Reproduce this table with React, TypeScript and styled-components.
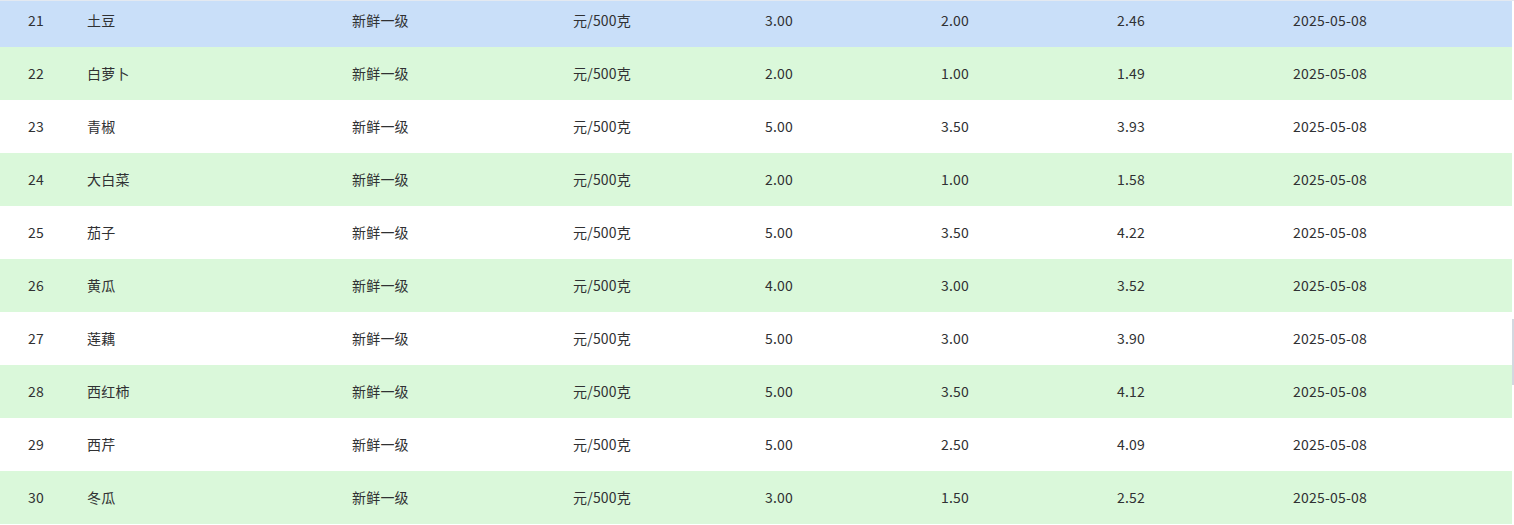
import React from 'react'
import styled, { createGlobalStyle } from 'styled-components'

const GlobalStyle = createGlobalStyle`
  html, body {
    margin: 0;
    padding: 0;
    background: #ffffff;
    overflow: hidden;
  }
  body {
    font-family: "Noto Sans CJK SC", "Noto Sans", sans-serif;
  }
`

const TableRoot = styled.div`
  position: relative;
  width: 1514px;
  height: 525px;
  overflow: hidden;
  border-top: 1px solid #e3e9f1;
  box-sizing: border-box;
`

const Body = styled.div`
  width: 1512px;
  display: flex;
  flex-direction: column;
`

const Row = styled.div<{ tone: 'current' | 'stripe' | 'plain'; clipped?: boolean }>`
  display: grid;
  grid-template-columns: 87px 265px 221px 192px 176px 176px 176px 1fr;
  align-items: center;
  height: ${(p) => (p.clipped ? '46px' : '53px')};
  padding-bottom: ${(p) => (p.clipped ? '8px' : '2px')};
  box-sizing: border-box;
  background: ${(p) =>
    p.tone === 'current' ? '#c9dff9' : p.tone === 'stripe' ? '#daf8da' : '#ffffff'};
`

const Cell = styled.div<{ first?: boolean }>`
  padding-left: ${(p) => (p.first ? '28px' : '0')};
  font-size: 14px;
  line-height: 20px;
  color: #303133;
  white-space: nowrap;
  letter-spacing: 0.2px;
`

// thin scrollbar thumb on the right edge
const ScrollThumb = styled.div`
  position: absolute;
  right: 0;
  top: 318px;
  width: 2px;
  height: 66px;
  background: #d3d8e0;
`

interface Item {
  id: number
  name: string
  grade: string
  unit: string
  high: string
  low: string
  avg: string
  date: string
}

const items: Item[] = [
  { id: 21, name: '土豆', high: '3.00', low: '2.00', avg: '2.46' },
  { id: 22, name: '白萝卜', high: '2.00', low: '1.00', avg: '1.49' },
  { id: 23, name: '青椒', high: '5.00', low: '3.50', avg: '3.93' },
  { id: 24, name: '大白菜', high: '2.00', low: '1.00', avg: '1.58' },
  { id: 25, name: '茄子', high: '5.00', low: '3.50', avg: '4.22' },
  { id: 26, name: '黄瓜', high: '4.00', low: '3.00', avg: '3.52' },
  { id: 27, name: '莲藕', high: '5.00', low: '3.00', avg: '3.90' },
  { id: 28, name: '西红柿', high: '5.00', low: '3.50', avg: '4.12' },
  { id: 29, name: '西芹', high: '5.00', low: '2.50', avg: '4.09' },
  { id: 30, name: '冬瓜', high: '3.00', low: '1.50', avg: '2.52' }
].map((r) => ({ ...r, grade: '新鲜一级', unit: '元/500克', date: '2025-05-08' }))

export default function App() {
  return (
    <>
      <GlobalStyle />
      <TableRoot>
        <Body>
          {items.map((item, i) => (
            <Row
              key={item.id}
              clipped={i === 0}
              tone={i === 0 ? 'current' : i % 2 === 1 ? 'stripe' : 'plain'}
            >
              <Cell first>{item.id}</Cell>
              <Cell>{item.name}</Cell>
              <Cell>{item.grade}</Cell>
              <Cell>{item.unit}</Cell>
              <Cell>{item.high}</Cell>
              <Cell>{item.low}</Cell>
              <Cell>{item.avg}</Cell>
              <Cell>{item.date}</Cell>
            </Row>
          ))}
        </Body>
        <ScrollThumb />
      </TableRoot>
    </>
  )
}
